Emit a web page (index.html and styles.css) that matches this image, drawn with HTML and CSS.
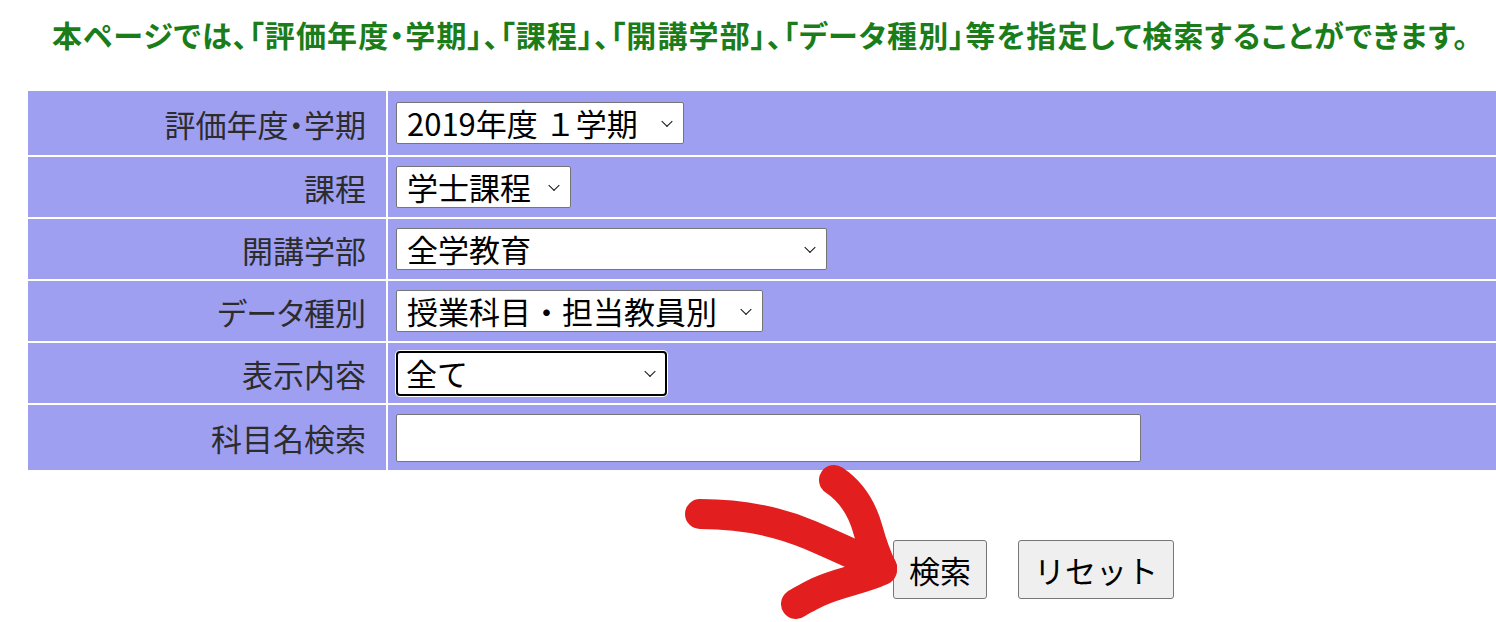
FILE: index.html
```html
<!DOCTYPE html>
<html lang="ja">
<head>
<meta charset="utf-8">
<title>検索</title>
<link rel="stylesheet" href="styles.css">
</head>
<body>
<p class="intro">本ページでは、「評価年度・学期」、「課程」、「開講学部」、「データ種別」等を指定して検索することができます。</p>
<form class="search">
  <div class="grid">
    <div class="label">評価年度・学期</div>
    <div class="field"><span class="sel sel-term"><select><option>2019年度 １学期</option></select></span></div>
    <div class="label">課程</div>
    <div class="field"><span class="sel sel-course"><select><option>学士課程</option></select></span></div>
    <div class="label">開講学部</div>
    <div class="field"><span class="sel sel-faculty"><select><option>全学教育</option></select></span></div>
    <div class="label">データ種別</div>
    <div class="field"><span class="sel sel-type"><select><option>授業科目・担当教員別</option></select></span></div>
    <div class="label">表示内容</div>
    <div class="field"><span class="sel sel-show is-focus"><select><option>全て</option></select></span></div>
    <div class="label">科目名検索</div>
    <div class="field"><input class="text" type="text"></div>
  </div>
  <div class="actions">
    <button type="button" class="btn">検索</button>
    <button type="button" class="btn">リセット</button>
  </div>
</form>
<svg class="arrow" width="1496" height="622" viewBox="0 0 1496 622">
  <g fill="none" stroke="#e21e1f" stroke-width="30" stroke-linecap="round" stroke-linejoin="round">
    <path d="M700 514 C 740 514, 775 520, 810 535 C 840 548, 862 558, 882 568"/>
    <path d="M834 480 C 852 492, 862 508, 868 530 C 873 548, 878 560, 882 568"/>
    <path d="M882 570 C 860 580, 840 582, 818 592 C 808 597, 800 601, 796 604"/>
  </g>
</svg>
</body>
</html>
```
FILE: styles.css
```css
html, body {
  margin: 0;
  padding: 0;
  background: #fff;
}

body {
  font-family: "Noto Sans CJK JP", "Noto Sans", sans-serif;
  color: #000;
  overflow: hidden;
  position: relative;
  width: 1496px;
  height: 622px;
}

.intro {
  margin: 0;
  padding: 14px 0 0 52px;
  height: 74px;
  box-sizing: border-box;
  font-size: 30px;
  line-height: 40px;
  font-weight: 700;
  color: #1a7d1a;
  font-feature-settings: "palt";
  letter-spacing: 1.1px;
  white-space: nowrap;
}

.search {
  margin: 0;
}

.grid {
  margin: 17px 0 0 28px;
  display: grid;
  grid-template-columns: 358px 1fr;
  grid-template-rows: 64px 60px 60px 60px 60px 65px;
  gap: 2px;
}

.label,
.field {
  background: #9f9ff2;
  display: flex;
  align-items: center;
}

.label {
  justify-content: flex-end;
  padding-right: 20px;
  font-size: 31px;
  color: #2c2c2c;
  font-feature-settings: "palt";
}

.field {
  padding-left: 8px;
}

.sel {
  position: relative;
  display: inline-block;
}

.sel::after {
  content: "";
  position: absolute;
  right: 13px;
  top: 50%;
  width: 7px;
  height: 7px;
  border-right: 1.5px solid #111;
  border-bottom: 1.5px solid #111;
  transform: translateY(-70%) rotate(45deg);
  pointer-events: none;
}

.sel select {
  appearance: none;
  -webkit-appearance: none;
  display: block;
  height: 42px;
  box-sizing: border-box;
  border: 1px solid #767676;
  border-radius: 2px;
  background: #fff;
  color: #000;
  font-family: "Noto Sans CJK JP", "Noto Sans", sans-serif;
  font-size: 31px;
  line-height: 40px;
  padding: 0 30px 0 10px;
  margin: 0;
}

.sel-term select { width: 288px; }
.sel-course select { width: 175px; }
.sel-faculty select { width: 431px; }
.sel-type select { width: 367px; }
.sel-show select {
  width: 271px;
  height: 45px;
  border: 2px solid #000;
  border-radius: 4px;
  padding-left: 8px;
  box-shadow: 0 0 0 1px #fff;
}

.text {
  width: 745px;
  height: 48px;
  box-sizing: border-box;
  border: 1px solid #767676;
  border-radius: 2px;
  background: #fff;
  margin: 0;
  padding: 0 8px;
  font-size: 28px;
}

.actions {
  display: flex;
  gap: 31px;
  padding: 70px 0 0 893px;
}

.btn {
  height: 59px;
  box-sizing: border-box;
  padding: 0 15px;
  border: 1px solid #767676;
  border-radius: 3px;
  background: #efefef;
  color: #000;
  font-family: "Noto Sans CJK JP", "Noto Sans", sans-serif;
  font-size: 31px;
  line-height: 1;
  margin: 0;
}

.arrow {
  position: absolute;
  left: 0;
  top: 0;
  pointer-events: none;
}
```
